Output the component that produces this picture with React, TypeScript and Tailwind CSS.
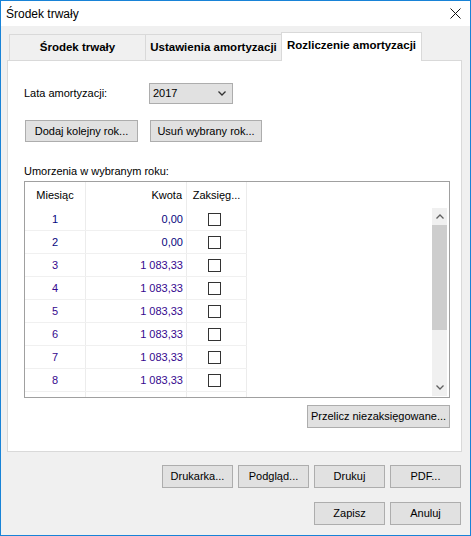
import React from 'react';

const rows = [
  { m: '1', k: '0,00', c: 'text-[#06067e]' },
  { m: '2', k: '0,00', c: 'text-[#06067e]' },
  { m: '3', k: '1 083,33', c: 'text-[#35088e]' },
  { m: '4', k: '1 083,33', c: 'text-[#35088e]' },
  { m: '5', k: '1 083,33', c: 'text-[#35088e]' },
  { m: '6', k: '1 083,33', c: 'text-[#35088e]' },
  { m: '7', k: '1 083,33', c: 'text-[#35088e]' },
  { m: '8', k: '1 083,33', c: 'text-[#35088e]' },
];

const Btn: React.FC<{ className?: string; children: React.ReactNode }> = ({ className = '', children }) => (
  <button
    className={`flex items-center justify-center border border-[#adadad] bg-[#e1e1e1] text-[11px] text-black leading-none ${className}`}
  >
    {children}
  </button>
);

const Chevron: React.FC<{ up?: boolean; color?: string }> = ({ up, color = '#606060' }) => (
  <svg width="8" height="5" viewBox="0 0 8 5">
    <path
      d={up ? 'M0.5 4.5 L4 1 L7.5 4.5' : 'M0.5 0.5 L4 4 L7.5 0.5'}
      fill="none"
      stroke={color}
      strokeWidth="1.3"
    />
  </svg>
);

export default function App() {
  return (
    <div className="w-[471px] h-[536px] border border-[#1883d7] flex flex-col font-['Liberation_Sans',Arial,sans-serif] text-black select-none">
      {/* Title bar */}
      <div className="h-[25px] bg-white flex items-center justify-between pl-[5px] pr-[9px]">
        <span className="text-[12px]">Środek trwały</span>
        <svg width="11" height="11" viewBox="0 0 11 11">
          <path d="M0.5 0.5 L10.5 10.5 M10.5 0.5 L0.5 10.5" stroke="#111" strokeWidth="1" />
        </svg>
      </div>

      {/* Body */}
      <div className="flex-1 bg-[#f0f0f0] flex flex-col">
        <div className="ml-[6px] mt-[6px] w-[455px]">
          {/* Tabs */}
          <div className="flex items-end h-[28px] pl-[2px]">
            <div className="w-[137px] h-[26px] border-l border-t border-r border-[#d9d9d9] bg-[#f0f0f0] flex items-center justify-center text-[11.5px] font-bold pt-[1px]">
              Środek trwały
            </div>
            <div className="w-[135px] h-[26px] border-t border-[#d9d9d9] bg-[#f0f0f0] flex items-center justify-center text-[11.5px] font-bold pt-[1px]">
              Ustawienia amortyzacji
            </div>
            <div className="relative z-10 w-[141px] h-[29px] mb-[-1px] border-l border-t border-r border-[#d9d9d9] bg-white flex items-center justify-center text-[11.5px] font-bold pb-[2px]">
              Rozliczenie amortyzacji
            </div>
          </div>

          {/* Panel */}
          <div className="h-[392px] border border-[#d9d9d9] bg-white pl-[16px] pr-[11px] pt-[22px] flex flex-col">
            <div className="flex items-center h-[21px]">
              <span className="w-[125px] text-[11px]">Lata amortyzacji:</span>
              <div className="w-[84px] h-[21px] border border-[#adadad] bg-[#e1e1e1] flex items-center justify-between pl-[3px] pr-[6px] text-[11px]">
                <span>2017</span>
                <Chevron color="#333" />
              </div>
            </div>

            <div className="flex gap-[12px] mt-[16px]">
              <Btn className="ml-[1px] w-[113px] h-[22px]">Dodaj kolejny rok...</Btn>
              <Btn className="w-[112px] h-[22px]">Usuń wybrany rok...</Btn>
            </div>

            <div className="mt-[22px] h-[14px] text-[11px] leading-[14px]">Umorzenia w wybranym roku:</div>

            {/* Table */}
            <div className="relative mt-[3px] w-[426px] h-[217px] border border-[#a0a0a0] bg-white overflow-hidden text-[11px]">
              <div className="flex h-[26px] w-[222px]">
                <div className="w-[61px] border-r border-[#ececec] flex items-center justify-center">Miesiąc</div>
                <div className="w-[101px] border-r border-[#ececec] flex items-center justify-end pr-[4px]">Kwota</div>
                <div className="w-[60px] border-r border-[#ececec] flex items-center justify-center">Zaksięg...</div>
              </div>
              {rows.map((r) => (
                <div key={r.m} className={`flex h-[23px] w-[222px] border-b border-[#f0f0f0] ${r.c}`}>
                  <div className="w-[61px] border-r border-[#ececec] flex items-center justify-center">{r.m}</div>
                  <div className="w-[101px] border-r border-[#ececec] flex items-center justify-end pr-[3px]">{r.k}</div>
                  <div className="w-[60px] border-r border-[#ececec] flex items-center pl-[21px]">
                    <div className="w-[13px] h-[13px] border border-[#333] bg-white" />
                  </div>
                </div>
              ))}
              {/* partially visible next row, cut by the list edge */}
              <div className="flex h-[23px] w-[222px]">
                <div className="w-[61px] border-r border-[#ececec]" />
                <div className="w-[101px] border-r border-[#ececec]" />
                <div className="w-[60px] border-r border-[#ececec]" />
              </div>

              {/* Scrollbar */}
              <div className="absolute top-[26px] right-[2px] w-[15px] h-[188px] bg-[#f0f0f0] flex flex-col">
                <div className="h-[17px] flex items-center justify-center">
                  <Chevron up />
                </div>
                <div className="h-[105px] bg-[#cdcdcd]" />
                <div className="flex-1" />
                <div className="h-[17px] flex items-center justify-center">
                  <Chevron />
                </div>
              </div>
            </div>

            <div className="flex justify-end mt-[7px]">
              <Btn className="w-[143px] h-[23px]">Przelicz niezaksięgowane...</Btn>
            </div>
          </div>
        </div>

        {/* Bottom buttons */}
        <div className="flex justify-end gap-[5px] pr-[9px] mt-[13px]">
          <Btn className="w-[71px] h-[23px]">Drukarka...</Btn>
          <Btn className="w-[71px] h-[23px]">Podgląd...</Btn>
          <Btn className="w-[71px] h-[23px]">Drukuj</Btn>
          <Btn className="w-[71px] h-[23px]">PDF...</Btn>
        </div>
        <div className="flex justify-end gap-[5px] pr-[9px] mt-[14px]">
          <Btn className="w-[71px] h-[23px]">Zapisz</Btn>
          <Btn className="w-[71px] h-[23px]">Anuluj</Btn>
        </div>
      </div>
    </div>
  );
}
